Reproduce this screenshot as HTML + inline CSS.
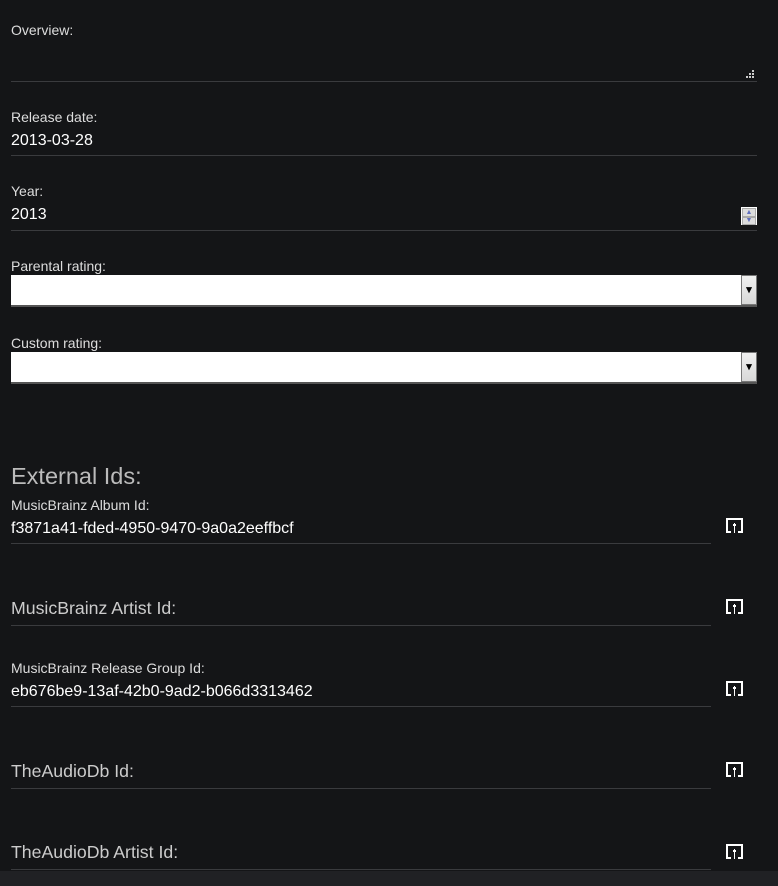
<!DOCTYPE html>
<html><head><meta charset="utf-8"><style>
body{margin:0;width:778px;height:886px;background:#141517;font-family:"Liberation Sans",sans-serif;position:relative;overflow:hidden;color:#fff}
.t{position:absolute;left:11px;white-space:nowrap}
.l{font-size:14px;color:#ddd}
.v{font-size:16px;color:#fff}
.p{font-size:17.7px;color:#ccc}
.h{font-size:23.5px;color:#bbb}
.ln{position:absolute;left:11px;height:1px;background:#3a3b3e}
.sel{position:absolute;left:11px;width:746px;height:30px;background:#fff;border-bottom:2px solid #555}
.sel b{position:absolute;right:0;top:0;width:16px;height:30px;background:linear-gradient(#f0f0f0,#d8d8d8);border:1px solid #777;box-sizing:border-box;font-size:11px;color:#000;text-align:center;line-height:28px}
.ic{position:absolute;left:726px;width:17px;height:15px}
.bar{position:absolute;left:0;top:871px;width:778px;height:15px;background:#202124}
</style></head><body>
<div class="t l" style="top:22px">Overview:</div>
<div class="ln" style="top:81px;width:746px"></div>
<svg style="position:absolute;left:746px;top:70px" width="9" height="9"><rect x="6" y="0" width="2" height="2" fill="#ccc"/><rect x="3" y="3" width="2" height="2" fill="#ccc"/><rect x="6" y="3" width="2" height="2" fill="#ccc"/><rect x="0" y="6" width="2" height="2" fill="#ccc"/><rect x="3" y="6" width="2" height="2" fill="#ccc"/><rect x="6" y="6" width="2" height="2" fill="#ccc"/></svg>

<div class="t l" style="top:109px">Release date:</div>
<div class="t v" style="top:132px">2013-03-28</div>
<div class="ln" style="top:155px;width:746px"></div>

<div class="t l" style="top:183px">Year:</div>
<div class="t v" style="top:206px">2013</div>
<div class="ln" style="top:230px;width:746px"></div>
<div style="position:absolute;left:741px;top:207px;width:16px;height:18px;background:#fff;box-sizing:border-box;border:1px solid #fff"><div style="height:7px;background:#ddd;border:1px solid #aaa;font-size:7px;color:#6070c0;text-align:center;line-height:7px">▲</div><div style="height:6px;background:#ddd;border:1px solid #aaa;font-size:7px;color:#6070c0;text-align:center;line-height:6px">▼</div></div>

<div class="t l" style="top:258px">Parental rating:</div>
<div class="sel" style="top:275px"><b>▾</b></div>

<div class="t l" style="top:335px">Custom rating:</div>
<div class="sel" style="top:352px"><b>▾</b></div>

<div class="t h" style="top:463px">External Ids:</div>

<div class="t l" style="top:497px">MusicBrainz Album Id:</div>
<div class="t v" style="top:520px">f3871a41-fded-4950-9470-9a0a2eeffbcf</div>
<div class="ln" style="top:543px;width:700px"></div>

<div class="t p" style="top:598px">MusicBrainz Artist Id:</div>
<div class="ln" style="top:625px;width:700px"></div>

<div class="t l" style="top:660px">MusicBrainz Release Group Id:</div>
<div class="t v" style="top:683px">eb676be9-13af-42b0-9ad2-b066d3313462</div>
<div class="ln" style="top:706px;width:700px"></div>

<div class="t p" style="top:761px">TheAudioDb Id:</div>
<div class="ln" style="top:788px;width:700px"></div>

<div class="t p" style="top:842px">TheAudioDb Artist Id:</div>
<div class="ln" style="top:869px;width:700px"></div>

<svg class="ic" style="top:518px" viewBox="0 0 17 15"><path d="M0 0H17V15H12V13H15V2H2V13H5V15H0Z M8 5H9V6H10V8H9V15H8V8H7V6H8Z" fill="#fff"/></svg>
<svg class="ic" style="top:599px" viewBox="0 0 17 15"><path d="M0 0H17V15H12V13H15V2H2V13H5V15H0Z M8 5H9V6H10V8H9V15H8V8H7V6H8Z" fill="#fff"/></svg>
<svg class="ic" style="top:681px" viewBox="0 0 17 15"><path d="M0 0H17V15H12V13H15V2H2V13H5V15H0Z M8 5H9V6H10V8H9V15H8V8H7V6H8Z" fill="#fff"/></svg>
<svg class="ic" style="top:762px" viewBox="0 0 17 15"><path d="M0 0H17V15H12V13H15V2H2V13H5V15H0Z M8 5H9V6H10V8H9V15H8V8H7V6H8Z" fill="#fff"/></svg>
<svg class="ic" style="top:844px" viewBox="0 0 17 15"><path d="M0 0H17V15H12V13H15V2H2V13H5V15H0Z M8 5H9V6H10V8H9V15H8V8H7V6H8Z" fill="#fff"/></svg>
<div class="bar"></div>
</body></html>
